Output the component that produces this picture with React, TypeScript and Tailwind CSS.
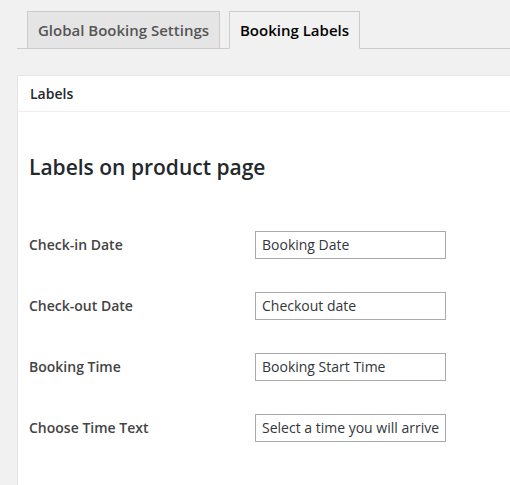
const rows = [
  { label: "Check-in Date", value: "Booking Date" },
  { label: "Check-out Date", value: "Checkout date" },
  { label: "Booking Time", value: "Booking Start Time" },
  { label: "Choose Time Text", value: "Select a time you will arrive" },
];

export default function App() {
  return (
    <div className="h-[485px] w-[510px] overflow-hidden bg-[#f1f1f1] font-['Open_Sans',sans-serif] text-[#23282d]">
      {/* Tabs */}
      <div className="ml-[17px] flex gap-[9px] border-b border-[#cccccc] pl-[10px] pt-[11px]">
        <div className="-mb-px flex h-[38px] w-[193px] shrink-0 items-center justify-center border border-[#cccccc] bg-[#e5e5e5] text-[15px] font-semibold text-[#555555]">
          Global Booking Settings
        </div>
        <div className="-mb-px flex h-[38px] w-[131px] shrink-0 items-center justify-center border border-[#cccccc] border-b-[#f1f1f1] bg-[#f1f1f1] text-[15px] font-semibold text-black">
          Booking Labels
        </div>
      </div>

      {/* Panel */}
      <div className="ml-[17px] mt-[26px] h-[420px] border-l border-t border-[#e5e5e5] bg-white">
        <div className="flex h-[36px] items-center border-b border-[#eeeeee] pl-[12px] text-[14px] font-semibold text-[#23282d]">
          Labels
        </div>
        <div className="pl-[11px]">
          <h2 className="mt-[41px] text-[21px] font-semibold leading-[28px] text-[#23282d]">
            Labels on product page
          </h2>
          <div className="mt-[33px]">
            {rows.map((row) => (
              <div key={row.label} className="flex h-[61px] items-center">
                <div className="w-[226px] shrink-0 text-[14px] font-semibold text-[#444444]">
                  {row.label}
                </div>
                <input
                  readOnly
                  value={row.value}
                  className="h-[28px] w-[191px] border border-[#aaaaaa] bg-white px-[6px] text-[14px] text-[#32373c] outline-none"
                />
              </div>
            ))}
          </div>
        </div>
      </div>
    </div>
  );
}
